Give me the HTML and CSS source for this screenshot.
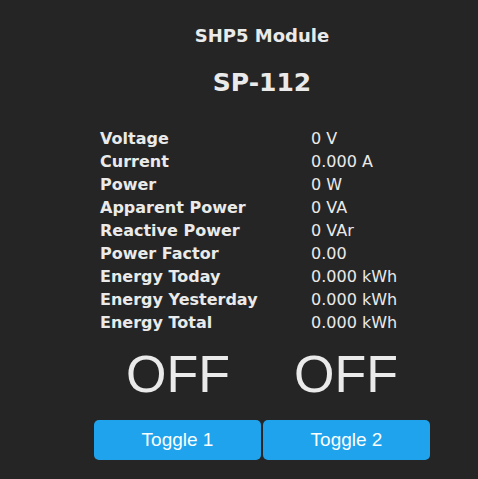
FILE: index.html
```html
<!DOCTYPE html>
<html>
<head>
<meta charset="utf-8">
<link rel="stylesheet" href="styles.css">
</head>
<body>
<main class="panel">
  <h3 class="module">SHP5 Module</h3>
  <h2 class="device">SP-112</h2>
  <div class="sensors">
    <div class="label">Voltage</div><div class="value">0 V</div>
    <div class="label">Current</div><div class="value">0.000 A</div>
    <div class="label">Power</div><div class="value">0 W</div>
    <div class="label">Apparent Power</div><div class="value">0 VA</div>
    <div class="label">Reactive Power</div><div class="value">0 VAr</div>
    <div class="label">Power Factor</div><div class="value">0.00</div>
    <div class="label">Energy Today</div><div class="value">0.000 kWh</div>
    <div class="label">Energy Yesterday</div><div class="value">0.000 kWh</div>
    <div class="label">Energy Total</div><div class="value">0.000 kWh</div>
  </div>
  <div class="states">
    <div class="state">OFF</div>
    <div class="state">OFF</div>
  </div>
  <div class="buttons">
    <button class="toggle">Toggle 1</button>
    <button class="toggle">Toggle 2</button>
  </div>
</main>
</body>
</html>
```
FILE: styles.css
```css
html, body {
  margin: 0;
  padding: 0;
  background: #252525;
  color: #eaeaea;
  font-family: "DejaVu Sans", Verdana, sans-serif;
}
.panel {
  width: 336px;
  margin-left: 94px;
  padding-top: 26px;
  display: flex;
  flex-direction: column;
}
.module {
  margin: 0;
  text-align: center;
  font-size: 18px;
  line-height: 20px;
  font-weight: bold;
}
.device {
  margin: 23px 0 0;
  text-align: center;
  font-size: 25px;
  line-height: 28px;
  font-weight: bold;
}
.sensors {
  margin-top: 30px;
  display: grid;
  grid-template-columns: 211px 1fr;
  padding-left: 6px;
  font-size: 16px;
  line-height: 23px;
}
.label {
  font-weight: bold;
  white-space: nowrap;
}
.value {
  white-space: nowrap;
}
.states {
  margin-top: 9px;
  display: grid;
  grid-template-columns: 1fr 1fr;
}
.state {
  text-align: center;
  font-family: "Liberation Sans", Arial, sans-serif;
  font-size: 52px;
  line-height: 62px;
}
.buttons {
  margin-top: 15px;
  display: grid;
  grid-template-columns: 1fr 1fr;
  gap: 2px;
}
.toggle {
  height: 40px;
  border: 0;
  border-radius: 5px;
  background: #1fa3ec;
  color: #faffff;
  font-family: "Liberation Sans", Arial, sans-serif;
  font-size: 19px;
  padding: 0;
}
```
